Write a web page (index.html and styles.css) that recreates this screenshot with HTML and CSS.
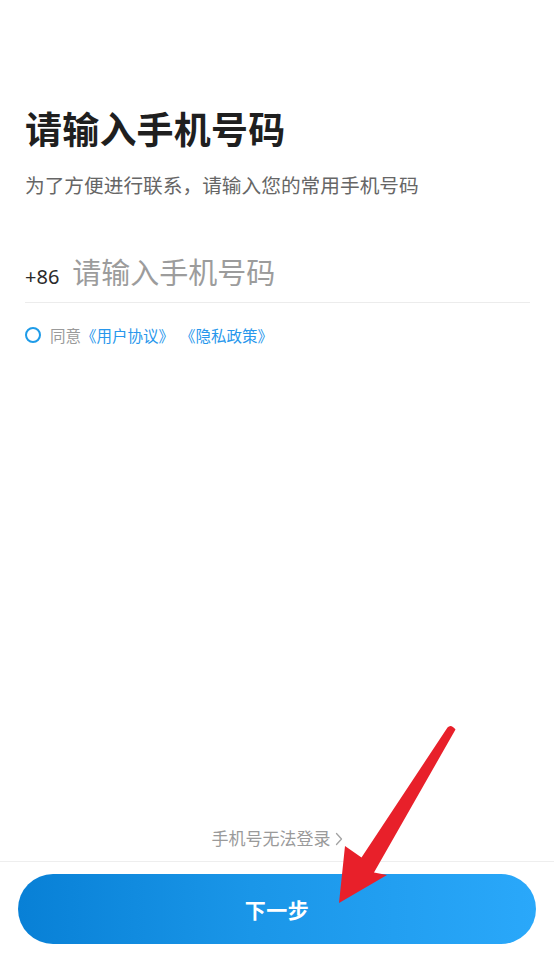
FILE: index.html
```html
<!DOCTYPE html>
<html lang="zh-CN">
<head>
<meta charset="utf-8">
<title>请输入手机号码</title>
<link rel="stylesheet" href="styles.css">
</head>
<body>
<div class="page">
  <main class="content">
    <h1 class="title">请输入手机号码</h1>
    <p class="subtitle">为了方便进行联系，请输入您的常用手机号码</p>
    <div class="phone-row">
      <span class="code">+86</span>
      <input class="phone-input" type="tel" placeholder="请输入手机号码">
    </div>
    <label class="agree">
      <span class="radio"></span>
      <span class="agree-text">同意</span><a class="doc">《用户协议》</a><a class="doc doc-second">《隐私政策》</a>
    </label>
  </main>
  <div class="spacer"></div>
  <a class="help">手机号无法登录<svg class="chev" viewBox="0 0 8 14" width="8" height="14"><path d="M1.5 1.5 L6.5 7 L1.5 12.5" fill="none" stroke="#a3a3a3" stroke-width="1.3" stroke-linecap="round" stroke-linejoin="round"/></svg></a>
  <div class="bottom-bar">
    <button class="next">下一步</button>
  </div>
  <svg class="arrow" viewBox="0 0 554 957" width="554" height="957">
    <path d="M447.5 727.5 Q451 723.5 455.5 729.5 L374 872.5 L387 875 L339 903 L345 846 L361.5 857.5 Z" fill="#e8202a"/>
  </svg>
</div>
</body>
</html>
```
FILE: styles.css
```css
* { box-sizing: border-box; }
html, body { margin: 0; padding: 0; background: #ffffff; }
body {
  font-family: "Noto Sans CJK SC", "Noto Sans", "Liberation Sans", sans-serif;
  width: 554px;
  height: 957px;
  overflow: hidden;
}
.page {
  position: relative;
  height: 957px;
  display: flex;
  flex-direction: column;
}
.content {
  padding: 110px 24px 0 25px;
}
.title {
  margin: 0;
  font-size: 37px;
  line-height: 37px;
  font-weight: 700;
  color: #1f1f1f;
  letter-spacing: 0.2px;
}
.subtitle {
  margin: 28px 0 0;
  font-size: 19.7px;
  line-height: 19.5px;
  color: #666666;
}
.phone-row {
  margin-top: 62px;
  display: flex;
  align-items: baseline;
  gap: 13px;
  padding-bottom: 11px;
  border-bottom: 1px solid #ececec;
  width: 505px;
}
.code {
  font-family: "Noto Sans", "Liberation Sans", sans-serif;
  font-size: 20px;
  color: #2a2a2a;
  line-height: 29px;
}
.phone-input {
  flex: 1;
  border: none;
  outline: none;
  padding: 0;
  margin: 0;
  font-family: "Noto Sans CJK SC", sans-serif;
  font-size: 29px;
  line-height: 29px;
  height: 29px;
  color: #333333;
  background: transparent;
}
.phone-input::placeholder {
  color: #9c9c9c;
}
.agree {
  display: flex;
  align-items: center;
  margin-top: 23px;
  font-size: 15.5px;
  line-height: 18px;
}
.radio {
  width: 16px;
  height: 16px;
  border: 2px solid #1e9be8;
  border-radius: 50%;
  margin-right: 9px;
}
.agree-text {
  color: #9a9a9a;
}
.doc {
  color: #2897ec;
  text-decoration: none;
}
.doc-second {
  margin-left: 6px;
}
.spacer { flex: 1; }
.help {
  align-self: center;
  display: flex;
  align-items: center;
  gap: 4px;
  font-size: 17px;
  line-height: 20px;
  color: #9a9a9a;
  margin-bottom: 13px;
}
.chev { margin-top: 1px; }
.bottom-bar {
  border-top: 1px solid #eeeeee;
  padding: 12px 18px 13px 18px;
}
.next {
  display: block;
  width: 100%;
  height: 70px;
  border: none;
  border-radius: 35px;
  background: linear-gradient(90deg, #0880d6 0%, #1a96e8 45%, #2aa8fa 100%);
  color: #ffffff;
  font-family: "Noto Sans CJK SC", sans-serif;
  font-size: 21px;
  font-weight: 700;
  letter-spacing: 0.5px;
  padding: 0;
}
.arrow {
  position: absolute;
  left: 0;
  top: 0;
  pointer-events: none;
}
```
